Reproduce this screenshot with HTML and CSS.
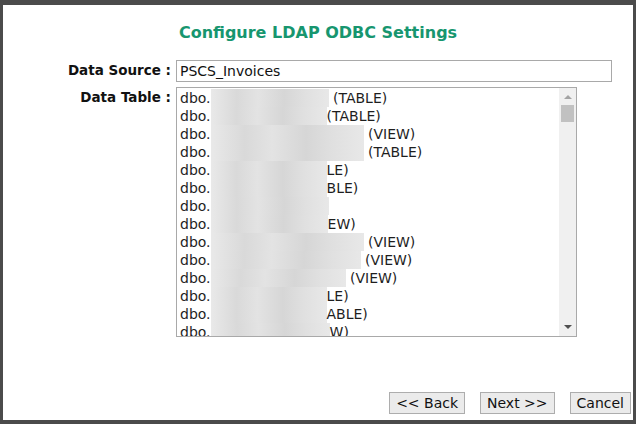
FILE: index.html
```html
<!DOCTYPE html>
<html lang="en">
<head>
    <meta charset="UTF-8">
    <title>Configure LDAP ODBC Settings</title>
    <link rel="stylesheet" href="styles.css">
</head>
<body>
    <div class="window">
        <h1 class="title">Configure LDAP ODBC Settings</h1>

        <div class="form">
            <label class="label" for="source">Data Source :</label>
            <input class="field" id="source" type="text" value="PSCS_Invoices">

            <label class="label">Data Table :</label>
            <div class="listbox">
                <div class="options">
                    <div class="opt">dbo.<span class="blur b118"></span> (TABLE)</div>
                    <div class="opt">dbo.<span class="blur b116"></span>(TABLE)</div>
                    <div class="opt">dbo.<span class="blur b153"></span> (VIEW)</div>
                    <div class="opt">dbo.<span class="blur b153"></span> (TABLE)</div>
                    <div class="opt">dbo.<span class="blur b116"></span>LE)</div>
                    <div class="opt">dbo.<span class="blur b116"></span>BLE)</div>
                    <div class="opt">dbo.<span class="blur b118"></span></div>
                    <div class="opt">dbo.<span class="blur b117"></span>EW)</div>
                    <div class="opt">dbo.<span class="blur b153"></span> (VIEW)</div>
                    <div class="opt">dbo.<span class="blur b150"></span> (VIEW)</div>
                    <div class="opt">dbo.<span class="blur b135"></span> (VIEW)</div>
                    <div class="opt">dbo.<span class="blur b116"></span>LE)</div>
                    <div class="opt">dbo.<span class="blur b116"></span>ABLE)</div>
                    <div class="opt">dbo.<span class="blur b119"></span>W)</div>
                </div>
                <div class="scrollbar">
                    <span class="arrow up"></span>
                    <span class="thumb"></span>
                    <span class="track"></span>
                    <span class="arrow down"></span>
                </div>
            </div>
        </div>

        <div class="buttons">
            <button class="btn">&lt;&lt; Back</button>
            <button class="btn">Next &gt;&gt;</button>
            <button class="btn">Cancel</button>
        </div>
    </div>
</body>
</html>
```

FILE: styles.css
```css
* {
    margin: 0;
    padding: 0;
    box-sizing: border-box;
}

body {
    background-color: #4b4b4b;
    font-family: 'DejaVu Sans', Verdana, sans-serif;
    padding: 5px 3px 4px 3px;
    height: 424px;
    overflow: hidden;
}

.window {
    background-color: #ffffff;
    height: 415px;
    display: flex;
    flex-direction: column;
}

.title {
    font-size: 16px;
    font-weight: bold;
    color: #17966f;
    text-align: center;
    line-height: 20px;
    margin-top: 18px;
}

.form {
    display: grid;
    grid-template-columns: 168px 1fr;
    column-gap: 5px;
    row-gap: 5px;
    margin-top: 17px;
    padding-right: 21px;
}

.label {
    font-size: 13.5px;
    font-weight: bold;
    color: #111111;
    text-align: right;
    line-height: 18px;
    padding-top: 1px;
}

.field {
    height: 22px;
    border: 1px solid #a9a9a9;
    font-family: 'DejaVu Sans', Verdana, sans-serif;
    font-size: 14px;
    color: #111111;
    padding: 0 3px;
    outline: none;
}

.listbox {
    width: 401px;
    height: 250px;
    border: 1px solid #a9a9a9;
    display: flex;
}

.options {
    flex: 1;
    overflow: hidden;
    padding: 1px 0 0 3px;
}

.opt {
    font-size: 14px;
    line-height: 18px;
    height: 18px;
    color: #1e1e1e;
    white-space: nowrap;
}

.blur {
    display: inline-block;
    height: 18px;
    vertical-align: top;
    background: linear-gradient(90deg, #e9e9e9, #d9d9d9 22%, #e3e3e3 40%, #d6d6d6 62%, #e0e0e0 80%, #e8e8e8);
}

.b116 { width: 116px; }
.b117 { width: 117px; }
.b118 { width: 118px; }
.b119 { width: 119px; }
.b135 { width: 135px; }
.b150 { width: 150px; }
.b153 { width: 153px; }

.scrollbar {
    width: 17px;
    background-color: #f0f0f0;
    display: flex;
    flex-direction: column;
    align-items: center;
}

.arrow {
    width: 0;
    height: 0;
    border-left: 4px solid transparent;
    border-right: 4px solid transparent;
    margin: 7px 0 6px;
}

.arrow.up {
    border-bottom: 4px solid #a3a3a3;
}

.arrow.down {
    border-top: 4px solid #505050;
    margin: 6px 0 7px;
}

.thumb {
    width: 13px;
    height: 17px;
    background-color: #c1c1c1;
}

.track {
    flex: 1;
}

.buttons {
    margin-top: auto;
    display: flex;
    justify-content: flex-end;
    gap: 15px;
    padding: 0 2px 6px 0;
}

.btn {
    height: 22px;
    padding: 0 6px;
    font-family: 'DejaVu Sans', Verdana, sans-serif;
    font-size: 14px;
    color: #111111;
    background-color: #ebebeb;
    border: 1px solid #adadad;
    border-radius: 0;
}
```
